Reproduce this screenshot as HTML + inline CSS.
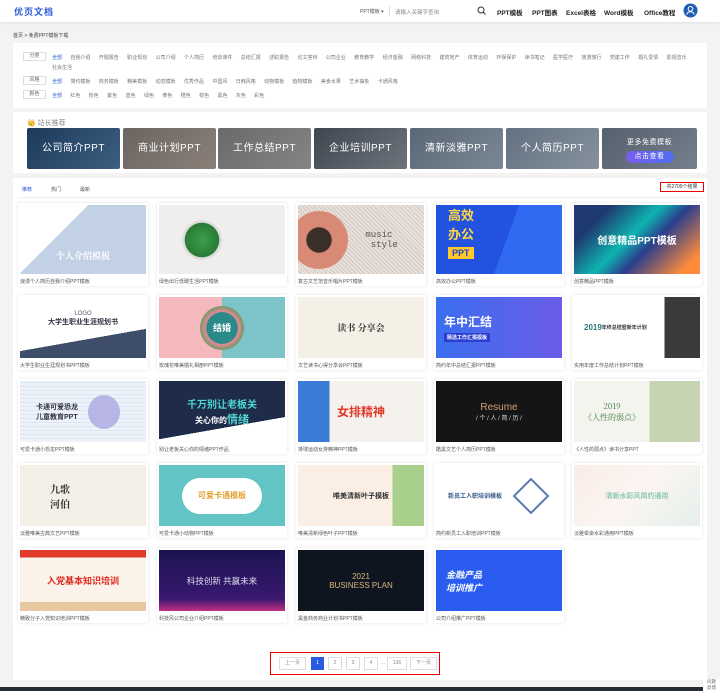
<!DOCTYPE html>
<html><head><meta charset="utf-8">
<style>
*{margin:0;padding:0;box-sizing:border-box}
body{width:720px;height:691px;background:#f3f3f3;font-family:"Liberation Sans","Noto Sans CJK SC",sans-serif;position:relative;overflow:hidden;color:#333}
.hdr{position:absolute;left:0;top:0;width:720px;height:22px;background:#fff;box-shadow:0 1px 3px rgba(0,0,0,.08)}
.logo{position:absolute;left:14px;top:5px;font-size:9px;color:#2a5bd7;font-weight:bold;letter-spacing:1px}
.abs{position:absolute;white-space:nowrap}
.nav{font-size:6.5px;font-weight:bold;color:#222;top:7px}
.panel{position:absolute;left:13px;width:694px;background:#fff}
.tag{position:absolute;left:10px;width:23px;height:9px;border:1px solid #ddd;font-size:5px;color:#666;text-align:center;line-height:7px}
.frow{position:absolute;left:39px;font-size:5px;color:#777;word-spacing:7px}
.frow b{color:#2a5bd7;font-weight:normal}
.tile{position:absolute;top:128px;width:93px;height:41px;border-radius:2px;color:#fff;font-size:10px;text-align:center;line-height:41px;letter-spacing:.5px}
.card{position:absolute;width:130px;background:#fff;box-shadow:0 0 3px rgba(0,0,0,.12);border-radius:1px}
.card .im{position:absolute;left:2px;top:2px;width:126px;overflow:hidden;display:flex;align-items:center;justify-content:center;text-align:center;font-weight:bold}
.card .cap{position:absolute;left:2px;bottom:1px;font-size:5px;color:#555;white-space:nowrap}
.pg{position:absolute;top:657px;height:13px;border:1px solid #ddd;font-size:5px;color:#888;text-align:center;line-height:11px;background:#fff}
</style></head><body>
<div class="hdr">
 <div class="logo">优页文档</div>
 <div class="abs" style="left:360px;top:8px;font-size:5px;color:#555">PPT模板 ▾</div>
 <div class="abs" style="left:389px;top:6px;width:1px;height:9px;background:#ddd"></div>
 <div class="abs" style="left:395px;top:8px;font-size:5.5px;color:#888">请输入关键字查询</div>
 <svg class="abs" style="left:477px;top:6px" width="9" height="9" viewBox="0 0 9 9"><circle cx="4" cy="4" r="3" fill="none" stroke="#333" stroke-width="1"/><path d="M6 6L8.5 8.5" stroke="#333" stroke-width="1"/></svg>
 <div class="abs nav" style="left:497px">PPT模板</div>
 <div class="abs nav" style="left:532px">PPT图表</div>
 <div class="abs nav" style="left:566px">Excel表格</div>
 <div class="abs nav" style="left:604px">Word模板</div>
 <div class="abs nav" style="left:644px">Office教程</div>
 <svg class="abs" style="left:683px;top:3px" width="15" height="15" viewBox="0 0 15 15"><circle cx="7.5" cy="7.5" r="7" fill="#1e5fb4"/><circle cx="7.5" cy="5.8" r="2.3" fill="none" stroke="#fff" stroke-width="1"/><path d="M3.8 11.5c.6-2 2-2.8 3.7-2.8s3.1.8 3.7 2.8" fill="none" stroke="#fff" stroke-width="1"/></svg>
</div>
<div class="abs" style="left:13px;top:32px;font-size:5px;color:#444">首页 &gt; 免费PPT模板下载</div>

<div class="panel" style="top:43px;height:65px">
 <div class="tag" style="top:9px">分类</div>
 <div class="frow" style="top:11px"><b>全部</b> 自我介绍 开题报告 职业规划 公司介绍 个人简历 培训课件 总结汇报 述职报告 论文答辩 公司企业 教育教学 经济金融 网络科技 建筑地产 体育运动 环保保护 读书笔记 医学医疗 旅游旅行 党建工作 婚礼爱情 影视音乐</div>
 <div class="frow" style="top:21px">社会生活</div>
 <div class="tag" style="top:33px">风格</div>
 <div class="frow" style="top:35px"><b>全部</b> 简约模板 商务模板 精美模板 动态模板 优秀作品 中国风 日韩风格 动物模板 植物模板 美食水果 艺术抽象 卡通风格</div>
 <div class="tag" style="top:47px">颜色</div>
 <div class="frow" style="top:49px"><b>全部</b> 红色 粉色 紫色 蓝色 绿色 黄色 橙色 棕色 黑色 灰色 彩色</div>
</div>

<div class="panel" style="top:112px;height:61px">
 <div class="abs" style="left:14px;top:6px;font-size:7px;color:#888">👑 站长推荐</div>
</div>
<div class="tile" style="left:27px;background:linear-gradient(135deg,#1d3a5c,#3d5f80)">公司简介PPT</div>
<div class="tile" style="left:123px;background:linear-gradient(135deg,#6b6460,#8a8078)">商业计划PPT</div>
<div class="tile" style="left:218px;background:linear-gradient(135deg,#6a6a6a,#858585)">工作总结PPT</div>
<div class="tile" style="left:314px;background:linear-gradient(135deg,#3e4650,#6d747c)">企业培训PPT</div>
<div class="tile" style="left:410px;background:linear-gradient(135deg,#5a6775,#7a8794)">清新淡雅PPT</div>
<div class="tile" style="left:506px;background:linear-gradient(135deg,#627080,#86929e)">个人简历PPT</div>
<div class="tile" style="left:602px;width:95px;background:linear-gradient(135deg,#56606c,#76808c);line-height:normal;font-size:7px">
 <div style="margin-top:9px">更多免费模板</div>
 <div style="margin:4px auto 0;width:48px;height:12px;border-radius:6px;background:linear-gradient(90deg,#7a5cf0,#4f6ff0);line-height:12px">点击查看</div>
</div>

<div class="panel" style="top:178px;height:502px">
 <div class="abs" style="left:9px;top:8px;font-size:5px;color:#2a5bd7">推荐</div>
 <div class="abs" style="left:38px;top:8px;font-size:5px;color:#555">热门</div>
 <div class="abs" style="left:67px;top:8px;font-size:5px;color:#555">最新</div>
 <div class="abs" style="left:647px;top:4px;width:44px;height:10px;border:1px solid #e00;font-size:5px;line-height:8px;text-align:center;color:#333">共2709个结果</div>
 <div class="abs" style="left:5px;top:19px;width:684px;height:1px;background:#eee"></div>
</div>

<!-- Row 1 -->
<div class="card" style="left:18px;top:203px;height:83px"><div class="im" style="height:69px;background:linear-gradient(135deg,#fff 35%,#c3d1e6 35%);color:#fff;font-size:9px;align-items:flex-end;padding-bottom:12px;font-family:'Noto Serif CJK SC',serif">个人介绍模板</div><div class="cap">浪漫个人简历自我介绍PPT模板</div></div>
<div class="card" style="left:157px;top:203px;height:83px"><div class="im" style="height:69px;background:#eeeeec"><div style="width:40px;height:40px;border-radius:50%;background:radial-gradient(#3aa14a,#2a7a36 60%,#ddd 62%);margin-left:-40px"></div></div><div class="cap">绿色出行低碳生活PPT模板</div></div>
<div class="card" style="left:296px;top:203px;height:83px"><div class="im" style="height:69px;background:repeating-linear-gradient(45deg,#e8e0da 0 2px,#d4c9c2 2px 3px);justify-content:flex-start"><div style="width:58px;height:58px;border-radius:50%;background:radial-gradient(#3b2f2c 30%,#d98a74 32%);margin-left:-8px"></div><div style="font-size:9px;color:#555;font-weight:normal;font-family:'Liberation Mono',monospace;margin-left:12px">music<br>&nbsp;&nbsp;style</div></div><div class="cap">复古文艺范音乐唱片PPT模板</div></div>
<div class="card" style="left:434px;top:203px;height:83px"><div class="im" style="height:69px;background:linear-gradient(110deg,#2152e0 55%,#2f6af0 55%);justify-content:flex-start;color:#ffd640;font-size:13px;padding-left:12px;flex-direction:column;align-items:flex-start"><div>高效<br>办公</div><div style="background:#ffc72c;color:#1d47c7;font-size:9px;padding:1px 4px;margin-top:4px">PPT</div></div><div class="cap">高效办公PPT模板</div></div>
<div class="card" style="left:572px;top:203px;height:83px"><div class="im" style="height:69px;background:linear-gradient(135deg,#1e3a70 20%,#0fb4b0 45%,#2c3e8c 60%,#ff8c3a 90%);color:#fff;font-size:10px">创意精品PPT模板</div><div class="cap">创意精品PPT模板</div></div>

<!-- Row 2 -->
<div class="card" style="left:18px;top:295px;height:75px"><div class="im" style="height:61px;background:linear-gradient(170deg,#fff 65%,#3e4e6a 65%);color:#334;font-size:7px;flex-direction:column;padding-bottom:18px"><div style="font-weight:normal;font-size:6px;color:#556">LOGO</div>大学生职业生涯规划书</div><div class="cap">大学生职业生涯规划书PPT模板</div></div>
<div class="card" style="left:157px;top:295px;height:75px"><div class="im" style="height:61px;background:linear-gradient(90deg,#f4b8bd 50%,#7cc4c8 50%)"><div style="width:44px;height:44px;border-radius:50%;background:radial-gradient(#2a8a8a 50%,#e88a98 52%,#5a9a5a 75%);color:#fff;font-size:9px;line-height:44px">结婚</div></div><div class="cap">玫瑰花唯美婚礼相册PPT模板</div></div>
<div class="card" style="left:296px;top:295px;height:75px"><div class="im" style="height:61px;background:#f4f0e6;color:#333;font-size:9px;font-family:'Noto Serif CJK SC',serif">读书 分享会</div><div class="cap">文艺读书心得分享会PPT模板</div></div>
<div class="card" style="left:434px;top:295px;height:75px"><div class="im" style="height:61px;background:linear-gradient(90deg,#3b6ef0,#6a5ce8);color:#fff;font-size:12px;flex-direction:column;justify-content:center;align-items:flex-start;padding-left:8px">年中汇结<div style="font-size:5px;background:#2a3fd0;padding:1px 3px;margin-top:3px">精选工作汇报模板</div></div><div class="cap">简约年中总结汇报PPT模板</div></div>
<div class="card" style="left:572px;top:295px;height:75px"><div class="im" style="height:61px;background:linear-gradient(90deg,#fff 72%,#3a3a3a 72%);color:#2a7a7a;font-size:8px;justify-content:flex-start;padding-left:10px;text-align:left">2019<br><span style="font-size:5px;color:#333">年终总结暨新年计划</span></div><div class="cap">实用年度工作总结计划PPT模板</div></div>

<!-- Row 3 -->
<div class="card" style="left:18px;top:379px;height:75px"><div class="im" style="height:61px;background:repeating-linear-gradient(0deg,#eef3f9 0 3px,#dce7f3 3px 4px);color:#334;font-size:7px;justify-content:flex-start;padding-left:16px;text-align:left">卡通可爱恐龙<br>儿童教育PPT<div style="width:32px;height:34px;border-radius:50%;background:#b7b5e6;margin-left:10px"></div></div><div class="cap">可爱卡通小恐龙PPT模板</div></div>
<div class="card" style="left:157px;top:379px;height:75px"><div class="im" style="height:61px;background:linear-gradient(170deg,#1e2c4a 70%,#fff 70%);color:#4fd6d0;font-size:10px;flex-direction:column">千万别让老板关<span style="color:#fff;font-size:8px">关心你的<span style="color:#4fd6d0;font-size:11px">情绪</span></span></div><div class="cap">别让老板关心你的情绪PPT作品</div></div>
<div class="card" style="left:296px;top:379px;height:75px"><div class="im" style="height:61px;background:linear-gradient(90deg,#3a7bd8 25%,#f5f2ee 25%);color:#e23a2a;font-size:12px">女排精神</div><div class="cap">排球运动女排精神PPT模板</div></div>
<div class="card" style="left:434px;top:379px;height:75px"><div class="im" style="height:61px;background:#151515;color:#d4a070;font-size:10px;font-weight:normal;flex-direction:column">Resume<span style="color:#ddd;font-size:6px">/ 个 / 人 / 简 / 历 /</span></div><div class="cap">酷黑文艺个人简历PPT模板</div></div>
<div class="card" style="left:572px;top:379px;height:75px"><div class="im" style="height:61px;background:linear-gradient(90deg,#f4f4ee 60%,#c7d4b4 60%);color:#3a7a3a;font-size:8px;font-weight:normal;font-family:'Noto Serif CJK SC',serif;justify-content:flex-start;padding-left:10px">2019<br>《人性的弱点》</div><div class="cap">《人性的弱点》读书分享PPT</div></div>

<!-- Row 4 -->
<div class="card" style="left:18px;top:463px;height:75px"><div class="im" style="height:61px;background:#f3efe6;color:#333;font-size:10px;font-family:'Noto Serif CJK SC',serif;justify-content:flex-start;padding-left:30px">九歌<br>河伯</div><div class="cap">淡雅唯美古典文艺PPT模板</div></div>
<div class="card" style="left:157px;top:463px;height:75px"><div class="im" style="height:61px;background:#62c4c4"><div style="width:80px;height:36px;border-radius:18px;background:#fff;color:#e0a030;font-size:8px;line-height:36px">可爱卡通模板</div></div><div class="cap">可爱卡通小动物PPT模板</div></div>
<div class="card" style="left:296px;top:463px;height:75px"><div class="im" style="height:61px;background:linear-gradient(90deg,#fbeee4 75%,#a8cf8c 75%);color:#333;font-size:7px">唯美清新叶子模板</div><div class="cap">唯美清新绿色叶子PPT模板</div></div>
<div class="card" style="left:434px;top:463px;height:75px"><div class="im" style="height:61px;background:#fff;color:#3a5a8a;font-size:6px;justify-content:flex-start;padding-left:12px">新员工入职培训模板<div style="width:26px;height:26px;border:2px solid #5a7ab0;transform:rotate(45deg);margin-left:16px"></div></div><div class="cap">简约新员工入职培训PPT模板</div></div>
<div class="card" style="left:572px;top:463px;height:75px"><div class="im" style="height:61px;background:linear-gradient(135deg,#f9ece6,#fbf5f2 50%,#e4f0ea);color:#8cc8b4;font-size:7px">清新水彩风简约通用</div><div class="cap">淡雅晕染水彩通用PPT模板</div></div>

<!-- Row 5 -->
<div class="card" style="left:18px;top:548px;height:75px"><div class="im" style="height:61px;background:linear-gradient(180deg,#e03a2a 0 12%,#fbf3ea 12% 85%,#e8c8a0 85%);color:#e0281c;font-size:9px">入党基本知识培训</div><div class="cap">精致分子入党知识培训PPT模板</div></div>
<div class="card" style="left:157px;top:548px;height:75px"><div class="im" style="height:61px;background:linear-gradient(180deg,#1a1450,#3a1870 80%,#c03080);color:#dde;font-size:8.5px;font-weight:normal">科技创新 共赢未来</div><div class="cap">科技风公司企业介绍PPT模板</div></div>
<div class="card" style="left:296px;top:548px;height:75px"><div class="im" style="height:61px;background:#0e1520;color:#d8b878;font-size:8px;font-weight:normal;flex-direction:column">2021<span>BUSINESS PLAN</span></div><div class="cap">黑金商务商业计划书PPT模板</div></div>
<div class="card" style="left:434px;top:548px;height:75px"><div class="im" style="height:61px;background:#2a5cf0;color:#fff;font-size:9px;font-style:italic;justify-content:flex-start;padding-left:10px;text-align:left">金融产品<br>培训推广</div><div class="cap">公司介绍推广PPT模板</div></div>

<!-- Pagination -->
<div class="abs" style="left:270px;top:652px;width:170px;height:23px;border:1.5px solid #e00"></div>
<div class="pg" style="left:279px;width:27px">上一页</div>
<div class="pg" style="left:311px;width:13px;background:#2a5be0;border-color:#2a5be0;color:#fff">1</div>
<div class="pg" style="left:328px;width:14px">2</div>
<div class="pg" style="left:346px;width:14px">3</div>
<div class="pg" style="left:364px;width:14px">4</div>
<div class="abs" style="left:381px;top:660px;font-size:5px;color:#888">...</div>
<div class="pg" style="left:387px;width:20px">136</div>
<div class="pg" style="left:410px;width:27px">下一页</div>

<div class="abs" style="left:703px;top:679px;font-size:4.5px;color:#666;line-height:6px;background:#fff;width:17px;text-align:center">问题<br>反馈</div>
<div class="abs" style="left:0;top:687px;width:703px;height:4px;background:#262a33"></div>
</body></html>
